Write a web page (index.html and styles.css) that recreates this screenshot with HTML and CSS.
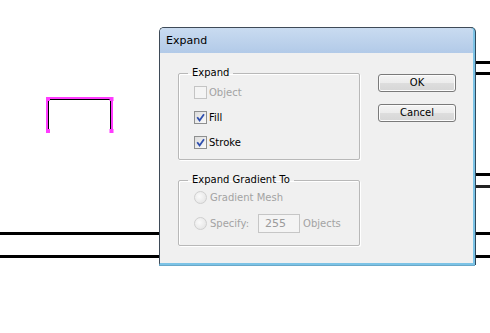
FILE: index.html
```html
<!DOCTYPE html>
<html>
<head>
<meta charset="utf-8">
<link rel="stylesheet" href="styles.css">
</head>
<body>
<div class="canvas">
  <div class="hline line-a"></div>
  <div class="hline line-b"></div>
  <div class="hline line-c"></div>
  <div class="hline line-d"></div>
  <div class="hline line-e full"></div>
  <div class="hline line-f full"></div>
  <svg class="bracket" width="70" height="40" viewBox="44 95 70 40">
    <path d="M47 132 V99.5 Q47 98 48.5 98 H110.5 Q112 98 112 99.5 V132" fill="none" stroke="#ff3cff" stroke-width="2"/>
    <path d="M48.5 132 V99.5 H110.5 V132" fill="none" stroke="#000" stroke-width="1"/>
    <rect x="46" y="97" width="4" height="4" fill="#ff3cff"/>
    <rect x="109.5" y="97" width="4" height="4" fill="#ff3cff"/>
    <rect x="46" y="129" width="4" height="4" fill="#ff3cff"/>
    <rect x="109.5" y="129" width="4" height="4" fill="#ff3cff"/>
  </svg>

  <div class="dialog">
    <div class="titlebar">Expand</div>
    <div class="dbody">
      <div class="groups">
        <fieldset class="group g1">
          <legend>Expand</legend>
          <label class="opt disabled"><span class="cb"></span>Object</label>
          <label class="opt"><span class="cb checked"><svg width="9" height="9" viewBox="0 0 9 9"><path d="M1.2 4.2 L3.6 7.4 L8 1.2" fill="none" stroke="#2f4fae" stroke-width="1.8"/></svg></span>Fill</label>
          <label class="opt"><span class="cb checked"><svg width="9" height="9" viewBox="0 0 9 9"><path d="M1.2 4.2 L3.6 7.4 L8 1.2" fill="none" stroke="#2f4fae" stroke-width="1.8"/></svg></span>Stroke</label>
        </fieldset>
        <fieldset class="group g2">
          <legend>Expand Gradient To</legend>
          <label class="opt disabled r1"><span class="rb"></span>Gradient Mesh</label>
          <div class="opt disabled r2"><span class="rb"></span>Specify:<span class="num">255</span>Objects</div>
        </fieldset>
      </div>
      <div class="buttons">
        <div class="btn">OK</div>
        <div class="btn">Cancel</div>
      </div>
    </div>
  </div>
</div>
</body>
</html>
```
FILE: styles.css
```css
html, body {
  margin: 0;
  padding: 0;
  background: #fff;
}
.canvas {
  position: relative;
  width: 490px;
  height: 333px;
  overflow: hidden;
  font-family: "DejaVu Sans", sans-serif;
  font-size: 10px;
}
.hline {
  position: absolute;
  left: 473px;
  right: 0;
  height: 3px;
  background: #000;
}
.line-a { top: 61px; }
.line-b { top: 72px; }
.line-c { top: 173px; }
.line-d { top: 185px; background: #222; }
.full { left: 0; }
.line-e { top: 232px; }
.line-f { top: 255px; }
.bracket {
  position: absolute;
  left: 44px;
  top: 95px;
}
.dialog {
  position: absolute;
  left: 159px;
  top: 27px;
  width: 313px;
  height: 235px;
  border: 1px solid #3e4a57;
  border-right: 2px solid #7cc3e6;
  border-bottom: 2px solid #7cc3e6;
  border-radius: 5px 5px 0 0;
  background: #f0f0f0;
  display: flex;
  flex-direction: column;
  box-shadow: 1px 0 0 #2f4a5e, 0 1px 0 #6aa8c8;
}
.titlebar {
  height: 25px;
  flex: none;
  background: linear-gradient(#c9dbf0, #b2cae8);
  border-radius: 4px 4px 0 0;
  font-size: 11px;
  color: #000;
  line-height: 26px;
  padding-left: 6px;
}
.dbody {
  display: flex;
  padding: 14px 0 0 18px;
  gap: 18px;
}
.groups {
  display: flex;
  flex-direction: column;
  gap: 14px;
}
.group {
  margin: 0;
  width: 182px;
  box-sizing: border-box;
  border: 1px solid #b8b8b8;
  border-radius: 2px;
  padding: 0 0 0 15px;
  box-shadow: inset 1px 1px 0 #fff, 1px 1px 0 #fff;
}
.group legend {
  padding: 0 4px;
  margin-left: -6px;
  color: #000;
  line-height: 12px;
}
.g1 { height: 93px; }
.g2 { height: 72px; }
.opt {
  display: flex;
  align-items: center;
  height: 13px;
  color: #000;
}
.g1 .opt { margin-top: 12px; }
.g1 .opt:first-of-type { margin-top: 7px; }
.opt.disabled { color: #a3a3a3; }
.cb {
  width: 11px;
  height: 11px;
  border: 1px solid #8e8f8f;
  background: linear-gradient(135deg, #dcdcdc, #fafafa);
  margin-right: 2px;
  display: flex;
  align-items: center;
  justify-content: center;
}
.disabled .cb {
  border-color: #c4c4c4;
  background: #f4f4f4;
}
.rb {
  width: 11px;
  height: 11px;
  border: 1px solid #cfcfcf;
  border-radius: 50%;
  background: radial-gradient(circle at 40% 40%, #fafafa, #e0e0e0);
  margin-right: 3px;
}
.r1 { margin-top: 5px; }
.r2 { margin-top: 10px; height: 19px; }
.num {
  display: inline-block;
  width: 42px;
  height: 19px;
  box-sizing: border-box;
  border: 1px solid #c6c6c6;
  background: #f4f4f4;
  line-height: 18px;
  padding-left: 6px;
  margin: 0 3px 0 9px;
  color: #9a9a9a;
  font-size: 11px;
}
.buttons {
  display: flex;
  flex-direction: column;
  gap: 12px;
  padding-top: 7px;
}
.btn {
  width: 78px;
  height: 18px;
  box-sizing: border-box;
  border: 1px solid #7a7a7a;
  border-radius: 3px;
  background: linear-gradient(#f4f4f4 0%, #ececec 48%, #dddddd 52%, #d6d6d6 100%);
  text-align: center;
  line-height: 16px;
  color: #000;
  box-shadow: inset 0 0 0 1px #fcfcfc;
}
```
